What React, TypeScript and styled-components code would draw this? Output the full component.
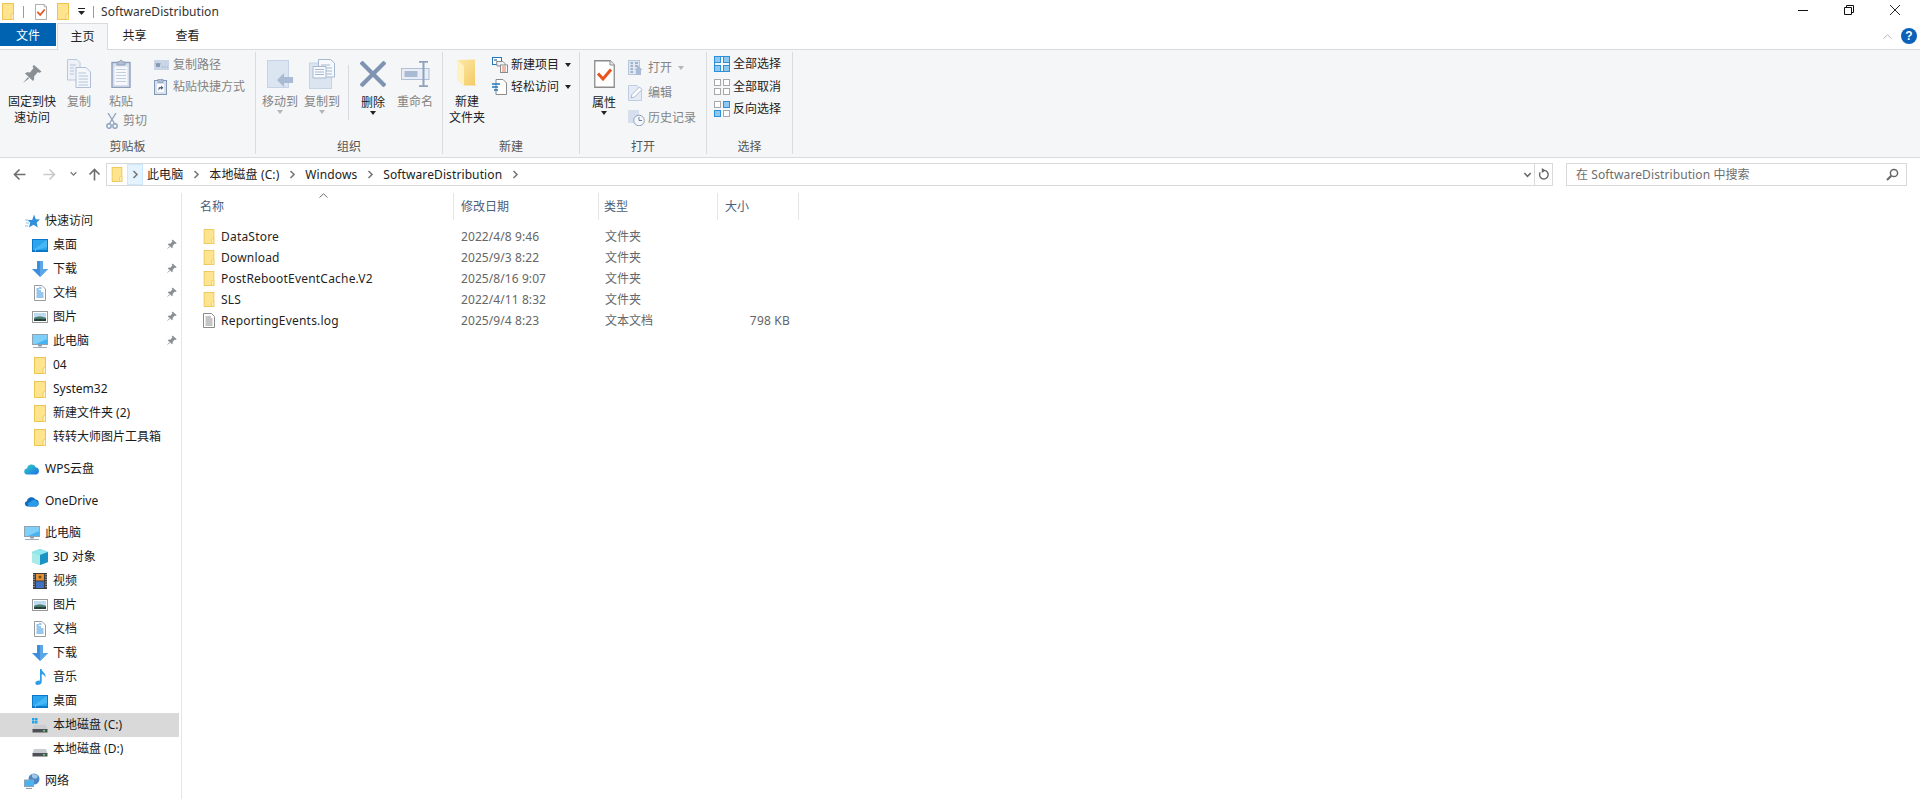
import React from "react";
import styled, { createGlobalStyle } from "styled-components";

const Global = createGlobalStyle`
  html, body { margin: 0; padding: 0; background: #fff; overflow: hidden; }
  #root { width: 1920px; height: 799px; }
  * { box-sizing: border-box; }
`;

const FONT = `"Noto Sans", "Noto Sans CJK SC", sans-serif`;

const Window = styled.div`
  width: 1920px; height: 799px; display: flex; flex-direction: column;
  font: 12px/16px ${FONT}; color: #1a1a1a; background: #fff; overflow: hidden;
`;
const TitleBar = styled.div`height: 23px; display: flex; align-items: center; flex: none;`;
const QatIcon = styled.span<{ $l?: number; $r?: number }>`
  display: inline-flex; align-items: center; justify-content: center;
  margin-left: ${p => p.$l ?? 0}px; margin-right: ${p => p.$r ?? 0}px;
`;
const QatSep = styled.span<{ $l: number }>`width: 1px; height: 12px; background: #9a9a9a; margin-left: ${p => p.$l}px;`;
const TitleText = styled.span`margin-left: 7px; color: #333; letter-spacing: .05px;`;
const WinControls = styled.div`margin-left: auto; display: flex; padding-right: 2px; height: 100%;`;
const WinBtn = styled.span`width: 46px; display: flex; align-items: center; justify-content: center; padding-bottom: 3px;`;

const TabRow = styled.div`height: 26px; display: flex; flex: none; align-items: flex-start;`;
const FileTab = styled.div`width: 56px; height: 23px; background: #0063b1; color: #fff; text-align: center; line-height: 25px; margin-right: 1px;`;
const HomeTab = styled.div`
  width: 51px; height: 27px; background: #f5f6f7; border: 1px solid #dadbdc; border-bottom: 0;
  text-align: center; line-height: 25px; position: relative; z-index: 1; color: #222;
`;
const Tab = styled.div`width: 53px; height: 26px; text-align: center; line-height: 26px; color: #222;`;
const TabRight = styled.div`margin-left: auto; display: flex; align-items: center; gap: 9px; height: 26px; padding-right: 3px;`;

const Ribbon = styled.div`
  height: 109px; flex: none; background: #f5f6f7; border-top: 1px solid #dadbdc; border-bottom: 1px solid #dadbdc;
  display: flex; align-items: flex-start;
`;
const Group = styled.div<{ $w: number }>`
  width: ${p => p.$w}px; margin-top: 2px; height: 102px; border-right: 1px solid #dadbdc;
  display: flex; flex-direction: column; flex: none;
`;
const GroupBody = styled.div<{ $pl?: number }>`
  height: 87px; display: flex; align-items: flex-start; padding-left: ${p => p.$pl ?? 0}px;
`;
const GroupLabel = styled.div`height: 15px; text-align: center; color: #555; line-height: 16px;`;
const Large = styled.div<{ $w: number; $off?: boolean }>`
  width: ${p => p.$w}px; flex: none; display: flex; flex-direction: column; align-items: center; padding-top: 5px;
  color: ${p => (p.$off ? "#848484" : "#222")}; text-align: center;
`;
const LargeIcon = styled.div`height: 33px; margin-bottom: 4px; display: flex; align-items: center; justify-content: center;`;
const LargeText = styled.div<{ $drop?: boolean }>`white-space: nowrap; margin-top: ${p => (p.$drop ? 1 : 0)}px;`;
const Caret = styled.span<{ $off?: boolean }>`
  width: 0; height: 0; border: 3px solid transparent; border-top: 4px solid ${p => (p.$off ? "#b5b5b5" : "#222")}; border-bottom: 0;
  display: block; margin-top: 0;
`;
const InlineCaret = styled(Caret)`margin-left: 6px;`;
const SmallCol = styled.div<{ $l?: number; $t?: number }>`
  display: flex; flex-direction: column; flex: none; margin-left: ${p => p.$l ?? 0}px; margin-top: ${p => p.$t ?? 2}px;
`;
const SmallRow = styled.div<{ $h: number; $off?: boolean }>`
  height: ${p => p.$h}px; display: flex; align-items: center; white-space: nowrap;
  color: ${p => (p.$off ? "#848484" : "#222")};
`;
const SmallIcon = styled.span<{ $w?: number }>`width: ${p => p.$w ?? 19}px; display: flex; align-items: center; flex: none;`;
const PasteCol = styled.div`width: 52px; flex: none; display: flex; flex-direction: column;`;
const CutRow = styled.div`display: flex; align-items: center; gap: 5px; margin-top: 2px; padding-left: 4px; color: #848484; height: 17px;`;
const VSep = styled.div`width: 1px; height: 55px; background: #dadbdc; margin: 13px 0 0 6px; flex: none;`;

const AddressRow = styled.div`height: 34px; flex: none; display: flex; align-items: flex-start; padding-top: 5px;`;
const NavBtns = styled.div`width: 106px; height: 22px; display: flex; align-items: center; flex: none;`;
const NavBtn = styled.span<{ $l: number }>`display: flex; margin-left: ${p => p.$l}px;`;
const AddressBox = styled.div`
  width: 1447px; height: 23px; border: 1px solid #d9d9d9; display: flex; align-items: center; flex: none; padding-left: 4px;
`;
const ChevBox = styled.span`
  width: 16px; height: 21px; background: #e5f3ff; border: 1px solid #cce8ff; margin: 0 4px; display: flex; align-items: center; justify-content: center; flex: none;
`;
const Crumb = styled.span`color: #222; white-space: nowrap; letter-spacing: .1px;`;
const CrumbSep = styled.span`width: 26px; display: flex; justify-content: center; flex: none;`;
const AddrRight = styled.div`margin-left: auto; display: flex; align-items: center; height: 100%;`;
const AddrDrop = styled.span`width: 14px; display: flex; justify-content: center; border-right: 1px solid #d9d9d9; height: 100%; align-items: center;`;
const AddrRefresh = styled.span`width: 17px; display: flex; justify-content: center;`;
const SearchBox = styled.div`
  width: 341px; height: 23px; margin-left: 13px; border: 1px solid #d9d9d9; display: flex; align-items: center;
  padding: 0 7px 0 9px; color: #6d6d6d; flex: none; letter-spacing: .1px;
`;
const SearchIcon = styled.span`margin-left: auto; display: flex;`;

const Main = styled.div`flex: 1; display: flex; min-height: 0; padding-top: 1px;`;
const NavPane = styled.nav`width: 182px; flex: none; border-right: 1px solid #e5e5e5; padding-top: 16px;`;
const NavSection = styled.div`margin-bottom: 8px;`;
const NavRow = styled.div<{ $lvl: number; $sel?: boolean }>`
  width: 179px; height: 24px; display: flex; align-items: center; position: relative; color: #1a1a1a; white-space: nowrap;
  padding-left: ${p => (p.$lvl ? 32 : 24)}px;
  background: ${p => (p.$sel ? "#d9d9d9" : "transparent")};
`;
const NavIcon = styled.span`width: 16px; height: 16px; flex: none; margin-right: 5px; display: flex; align-items: center; justify-content: center;`;
const NavPin = styled.span`position: absolute; left: 166px; top: 6px; display: flex;`;

const Files = styled.div`flex: 1; min-width: 0;`;
const GRID = "272px 145px 119px 81px";
const HeaderRow = styled.div`display: grid; grid-template-columns: ${GRID}; height: 27px; margin-bottom: 6px; position: relative;`;
const HeaderCell = styled.div<{ $pl: number }>`
  border-right: 1px solid #e5e5e5; padding-left: ${p => p.$pl}px; line-height: 27px; color: #4c607a;
`;
const SortArrow = styled.span`position: absolute; left: 137px; top: 0; display: flex;`;
const FileRow = styled.div`display: grid; grid-template-columns: ${GRID}; height: 21px; align-items: center; color: #666;`;
const NameCell = styled.div`display: flex; align-items: center; padding-left: 21px; color: #1f1f1f; white-space: nowrap; letter-spacing: .2px;`;
const FileIcon = styled.span`width: 18px; display: flex; flex: none;`;
const DateCell = styled.div`padding-left: 7px; letter-spacing: .08px;`;
const TypeCell = styled.div`padding-left: 6px;`;
const SizeCell = styled.div`text-align: right; padding-right: 9px; letter-spacing: .2px;`;
const ArrowSvg = styled.svg<{ $rot: number }>`transform: rotate(${p => p.$rot}deg);`;

/* ---------- icons ---------- */
const Folder = ({ w = 12, h = 17 }: { w?: number; h?: number }) => (
  <svg width={w} height={h} viewBox="0 0 12 17">
    <rect x=".5" y=".5" width="11" height="16" fill="#ffe48f" stroke="#ecc452" />
    <path d="M9 16.5V11.5L11.5 10V16.5Z" fill="#fff3c4" stroke="#ecc452" strokeWidth=".8" />
  </svg>
);
const CheckDoc = ({ w = 12, h = 16 }: { w?: number; h?: number }) => (
  <svg width={w} height={h} viewBox="0 0 21 28">
    <path d="M.75.75H16L20.25 5V27.25H.75Z" fill="#fff" stroke="#8b8b8b" strokeWidth="1.3" />
    <path d="M16 .75V5H20.25" fill="#eee" stroke="#8b8b8b" strokeWidth="1" />
    <path d="M4 13.5L9 19 17 9.5" fill="none" stroke="#e8531f" strokeWidth="3" />
  </svg>
);
const Pin = ({ s = 20, c = "#8a8f94" }: { s?: number; c?: string }) => (
  <svg width={s} height={s} viewBox="0 0 20 20">
    <path d="M12 1L19.5 7.5 17.5 9 16 8 12 12.5C12.5 14.5 12 16 11 17L3 9.5C4 8.5 6 8 8 8.5L11.5 4 10.5 2.5Z" fill={c} />
    <path d="M6 13L1 19 7 14.5Z" fill={c} />
  </svg>
);
const CopyIcon = () => (
  <svg width="24" height="29" viewBox="0 0 24 29">
    <path d="M.5.5H10L13 3.5V21H.5Z" fill="#eef2f8" stroke="#b9c8dd" />
    <path d="M9 8.5H19L23.5 13V28.5H9Z" fill="#f5f7fb" stroke="#aebfd6" />
    <path d="M3 6H9M3 9H7M3 12H7M3 15H7M11.5 14H19M11.5 17H21M11.5 20H21M11.5 23H21M11.5 26H21" stroke="#b4c4da" />
  </svg>
);
const PasteIcon = () => (
  <svg width="20" height="29" viewBox="0 0 20 29">
    <rect x="1" y="3.5" width="18" height="25" fill="#d6deeb" stroke="#8d9fba" strokeWidth="1.4" />
    <rect x="3.5" y="7.5" width="13" height="18.5" fill="#f6f8fb" />
    <path d="M5 10.5H15M5 13.5H15M5 16.5H15M5 19.5H15M5 22.5H15" stroke="#c2cfe0" />
    <path d="M6 6V3H8.5C8.5.7 11.5.7 11.5 3H14V6Z" fill="#b3c0d4" stroke="#8d9fba" />
  </svg>
);
const CutIcon = () => (
  <svg width="12" height="16" viewBox="0 0 12 16">
    <path d="M2 0L8.5 10.5M10 0L3.5 10.5" stroke="#8ea1bd" strokeWidth="1.3" fill="none" />
    <circle cx="3" cy="13" r="2.2" fill="none" stroke="#8ea1bd" strokeWidth="1.4" />
    <circle cx="9" cy="13" r="2.2" fill="none" stroke="#8ea1bd" strokeWidth="1.4" />
  </svg>
);
const PathIcon = () => (
  <svg width="15" height="10" viewBox="0 0 15 10">
    <rect width="15" height="10" fill="#c8d5e7" />
    <path d="M2 3L3 7 4 3 5 7 6 3M8 7H8.7M10.5 7H11.2M13 7H13.7" stroke="#6b7f9c" strokeWidth=".8" fill="none" />
  </svg>
);
const ShortcutIcon = () => (
  <svg width="13" height="16" viewBox="0 0 13 16">
    <rect x=".5" y="1.5" width="12" height="14" fill="#d7e0ee" stroke="#8297b6" />
    <rect x="4" y=".5" width="5" height="3" fill="#aebdd2" stroke="#8297b6" strokeWidth=".7" />
    <rect x="3" y="5" width="7" height="8" fill="#fff" />
    <path d="M4.5 12V9.5C4.5 8.5 5 8 6.5 8H7V6.5L9.5 8.8 7 11V9.6C6 9.5 5.5 10 4.5 12Z" fill="#52657f" />
  </svg>
);
const MoveIcon = () => (
  <svg width="26" height="28" viewBox="0 0 26 28">
    <rect x=".5" y=".5" width="21" height="27" fill="#dbe4f1" stroke="#c6d3e6" />
    <path d="M10 20L17 13V17H26V23H17V27Z" fill="#a9bad3" />
  </svg>
);
const CopyToIcon = () => (
  <svg width="26" height="30" viewBox="0 0 26 30">
    <rect x=".5" y="4" width="22" height="25.5" fill="#dbe4f1" stroke="#c6d3e6" />
    <path d="M9.5.5H21.5L25.5 4V18H9.5Z" fill="#f7f9fc" stroke="#a6b8d1" />
    <path d="M12 6H21M12 9H23M12 12H23M12 15H23" stroke="#a6b8d1" />
    <path d="M4 7.5H17V19H4Z" fill="#f7f9fc" stroke="#a6b8d1" />
    <path d="M6 10.5H15M6 13H15M6 15.5H15" stroke="#a6b8d1" />
  </svg>
);
const DeleteIcon = () => (
  <svg width="26" height="26" viewBox="0 0 26 26">
    <path d="M2.5 2.5L23.5 23.5M23.5 2.5L2.5 23.5" stroke="#7f93b3" strokeWidth="4.2" strokeLinecap="square" />
  </svg>
);
const RenameIcon = () => (
  <svg width="29" height="26" viewBox="0 0 29 26">
    <rect x=".5" y="7.5" width="27.5" height="11" fill="#e9eef6" stroke="#aebfd6" />
    <rect x="3.5" y="10" width="13" height="6" fill="#a9bad3" />
    <path d="M18 .8H27M18 25.2H27M22.5 1V25" stroke="#8ea1bd" strokeWidth="2" fill="none" />
  </svg>
);
const NewFolderIcon = () => (
  <svg width="20" height="29" viewBox="0 0 20 29">
    <defs>
      <linearGradient id="nf" x1="0" y1="0" x2="1" y2="1">
        <stop offset="0" stopColor="#fdeaa6" />
        <stop offset="1" stopColor="#f3c965" />
      </linearGradient>
    </defs>
    <path d="M0 1L18 .5V25L19.5 26.5H7L0 20Z" fill="url(#nf)" />
    <path d="M0 1L7 7V26.5L0 20Z" fill="#fff1c0" />
  </svg>
);
const NewItemIcon = () => (
  <svg width="16" height="16" viewBox="0 0 16 16">
    <rect x=".5" y=".5" width="9" height="7" fill="#fff" stroke="#1c79c4" />
    <rect x="2" y="2" width="3" height="2" fill="#8ea1bd" />
    <path d="M4.5 4.5H11L13 6.5V9H5Z" fill="#eef2f8" stroke="#8b8b8b" />
    <rect x="8.5" y="8" width="7" height="7.5" fill="#f9fbff" stroke="#8b8b8b" />
    <path d="M10 10H14M10 12H14M10 14H14" stroke="#e07a5f" />
  </svg>
);
const EasyIcon = () => (
  <svg width="15" height="16" viewBox="0 0 15 16">
    <path d="M4 .5H11L14.5 4V15.5H4Z" fill="#fff" stroke="#8b8b8b" />
    <path d="M0 5H8M0 8H6M2 11H6" stroke="#1c79c4" strokeWidth="1.3" />
  </svg>
);
const OpenIcon = () => (
  <svg width="15" height="15" viewBox="0 0 15 15">
    <rect x=".5" y=".5" width="11" height="14" fill="#dfe7f2" stroke="#b6c5da" />
    <path d="M2.5 3H5M7 3H10M2.5 6H5M7 6H10M2.5 9H5M2.5 12H5" stroke="#8ea1bd" strokeWidth="1.4" />
    <path d="M8 15V10H6.5L10.5 6 14.5 10H13V15Z" fill="#a9bad3" />
  </svg>
);
const EditIcon = () => (
  <svg width="15" height="16" viewBox="0 0 15 16">
    <path d="M.5.5H9L13.5 5V15.5H.5Z" fill="#e4ebf5" stroke="#c0cde0" />
    <path d="M3 13L4 9.5 11.5 2 14 4.5 6.5 12Z" fill="#fff" stroke="#a9bad3" />
  </svg>
);
const HistoryIcon = () => (
  <svg width="17" height="16" viewBox="0 0 17 16">
    <rect width="11" height="13" fill="#d5dfed" />
    <circle cx="11" cy="10.5" r="5.3" fill="#f4f6fa" stroke="#8ea1bd" />
    <path d="M11 7V10.5H14" stroke="#6f829d" fill="none" />
  </svg>
);
const SelectGrid = ({ on }: { on: boolean[] }) => {
  const cells = [[0, 0], [9, 0], [0, 9], [9, 9]];
  return (
    <svg width="16" height="16" viewBox="0 0 16 16">
      {on.every(Boolean) && <rect x=".5" y=".5" width="15" height="15" fill="none" stroke="#2b90d9" />}
      {cells.map(([x, y], i) => (
        <rect key={i} x={x + .5} y={y + .5} width="6" height="6"
          fill={on[i] ? "#8ec8f0" : "#fff"} stroke={on[i] ? "#2b90d9" : "#a8a8a8"} />
      ))}
    </svg>
  );
};
const Chevron = ({ c = "#777", s = 7 }: { c?: string; s?: number }) => (
  <svg width={s} height={s + 2} viewBox="0 0 7 9">
    <path d="M1.5 1L5 4.5 1.5 8" fill="none" stroke={c} strokeWidth="1.6" />
  </svg>
);
const Arrow = ({ dir, c }: { dir: "l" | "r" | "u"; c: string }) => {
  const rot = dir === "l" ? 0 : dir === "r" ? 180 : 90;
  return (
    <ArrowSvg $rot={rot} width="13" height="13" viewBox="0 0 13 13">
      <path d="M12.5 6.5H1.5M6.5 1.5L1.5 6.5 6.5 11.5" fill="none" stroke={c} strokeWidth="1.6" />
    </ArrowSvg>
  );
};
const SmallDown = ({ c = "#777", w = 8 }: { c?: string; w?: number }) => (
  <svg width={w} height="6" viewBox="0 0 8 6">
    <path d="M.8 1L4 4.3 7.2 1" fill="none" stroke={c} strokeWidth="1.5" />
  </svg>
);
const Refresh = () => (
  <svg width="12" height="13" viewBox="0 0 11 12">
    <path d="M6 2.2A4 4 0 1 1 2 4" fill="none" stroke="#666" strokeWidth="1.3" />
    <path d="M3.5 0L7 2.3 3.5 4.5Z" fill="#666" />
  </svg>
);
const Magnifier = () => (
  <svg width="13" height="13" viewBox="0 0 13 13">
    <circle cx="8" cy="5" r="3.6" fill="none" stroke="#666" strokeWidth="1.5" />
    <path d="M5.3 7.7L1 12" stroke="#666" strokeWidth="2" />
  </svg>
);
const Star = () => (
  <svg width="15" height="15" viewBox="0 0 15 15">
    <path d="M9 .5L10.8 5.2 15 5.6 11.7 8.5 12.8 13.5 8.5 10.8 4 13.5 5.2 8.5 2.5 6H7.2Z" fill="#2f8fdd" />
    <path d="M0 6H3M1 9H4M0 12H3" stroke="#7fc0ef" />
  </svg>
);
const Desktop = () => (
  <svg width="16" height="13" viewBox="0 0 16 13">
    <rect width="16" height="13" fill="#0b77c8" />
    <path d="M1 1H15V11H1Z" fill="#2ba5ee" />
    <path d="M15 1V8L4 11H1Z" fill="#47b8f5" />
    <path d="M3 11.7H13" stroke="#dff" strokeWidth=".7" strokeDasharray="1 9" />
  </svg>
);
const Download = () => (
  <svg width="16" height="16" viewBox="0 0 16 16">
    <path d="M5 0H11V8H16L8 16 0 8H5Z" fill="#3d8fdc" />
    <path d="M8 0H11V8H16L8 16Z" fill="#5ba6e8" />
  </svg>
);
const DocIcon = () => (
  <svg width="12" height="16" viewBox="0 0 12 16">
    <path d="M.5.5H8L11.5 4V15.5H.5Z" fill="#fff" stroke="#9a9a9a" />
    <path d="M5 3H7.5M2.5 6H7M2.5 8H9.5M5 10H9.5M2.5 12H9.5" stroke="#2f8fdd" />
    <path d="M2.5 4H5M2.5 10H5" stroke="#2f8fdd" />
  </svg>
);
const PicIcon = () => (
  <svg width="16" height="12" viewBox="0 0 16 12">
    <rect x=".5" y=".5" width="15" height="11" fill="#fff" stroke="#9a9a9a" />
    <rect x="2" y="2" width="12" height="8" fill="#bcdaf0" />
    <path d="M2 7C5 5 10 5 14 7V10H2Z" fill="#4c7a6e" />
    <path d="M2 8.5C6 7.5 10 8.5 14 8V10H2Z" fill="#26403a" />
  </svg>
);
const Monitor = () => (
  <svg width="16" height="14" viewBox="0 0 16 14">
    <rect x=".5" y=".5" width="15" height="10" fill="#49b3f0" stroke="#8fa3b5" />
    <path d="M1 1H15V5L4 10H1Z" fill="#7fd0f9" />
    <path d="M6 11H10V12.5H6Z" fill="#8f9ca8" />
    <path d="M1 13.5H15" stroke="#a0adb9" />
  </svg>
);
const Cube = () => (
  <svg width="16" height="16" viewBox="0 0 16 16">
    <path d="M8 0L16 3V13L8 16 0 13V3Z" fill="#4ec3da" />
    <path d="M8 0L16 3 8 6 0 3Z" fill="#8ee8ee" />
    <path d="M0 3L8 6V16L0 13Z" fill="#a9ebe6" />
    <path d="M8 6L16 3V13L8 16Z" fill="#1c93c6" />
  </svg>
);
const Film = () => (
  <svg width="14" height="16" viewBox="0 0 14 16">
    <rect width="14" height="16" fill="#3d3d3d" />
    <path d="M1 1V15M13 1V15" stroke="#ddd" strokeDasharray="1.2 1.2" />
    <rect x="3" y="1" width="8" height="6.5" fill="#e59138" />
    <rect x="3" y="8.5" width="8" height="6.5" fill="#3f72c4" />
    <circle cx="7" cy="4" r="1.5" fill="#6b4f1c" />
  </svg>
);
const Music = () => (
  <svg width="11" height="16" viewBox="0 0 11 16">
    <path d="M5 0H6.5C7 3 11 4 10.5 8.5 9.8 6.5 8.5 5.5 6.7 5V13C6.7 15 4.5 16 2.5 16 0.5 16 0 14.5.5 13.3 1.2 11.8 3.5 11 5 11.7Z" fill="#2d9de8" />
  </svg>
);
const Drive = ({ win }: { win?: boolean }) => (
  <svg width="16" height="16" viewBox="0 0 16 16">
    {win && (<g fill="#1ea4e9"><rect x="0" y="1" width="2.5" height="2.5" /><rect x="3" y="1" width="2.5" height="2.5" /><rect x="0" y="4" width="2.5" height="2.5" /><rect x="3" y="4" width="2.5" height="2.5" /></g>)}
    <path d="M2 8H14L15.5 12H.5Z" fill="#c9cdd1" />
    <rect x=".5" y="12" width="15" height="3.5" fill="#4e5256" />
    <rect x="11" y="13" width="2" height="1.5" fill="#5fdc5f" />
  </svg>
);
const Globe = () => (
  <svg width="16" height="16" viewBox="0 0 16 16">
    <circle cx="10" cy="6" r="5.5" fill="#4c86c4" />
    <path d="M8 1C7 4 9 6 12 5.5 14 5 14 2 12.5 1.5Z" fill="#9ec7e8" />
    <rect x=".5" y="7" width="9" height="6.5" fill="#49b3f0" stroke="#8fa3b5" />
    <path d="M2 15.5H8" stroke="#8f9ca8" strokeWidth="1.2" />
  </svg>
);
const WpsCloud = () => (
  <svg width="16" height="12" viewBox="0 0 16 12">
    <defs>
      <linearGradient id="wc" x1="0" y1="0" x2="1" y2="1">
        <stop offset="0" stopColor="#2fd4c4" />
        <stop offset="1" stopColor="#1b6fe8" />
      </linearGradient>
    </defs>
    <path d="M3.5 11.5A3 3 0 0 1 3 5.5 4.6 4.6 0 0 1 11.8 4.2 3.8 3.8 0 0 1 12.5 11.5Z" fill="url(#wc)" />
  </svg>
);
const OneDrive = () => (
  <svg width="16" height="11" viewBox="0 0 16 11">
    <path d="M3.2 10.5A2.8 2.8 0 0 1 3 5 4.5 4.5 0 0 1 11.4 3.6 3.6 3.6 0 0 1 12.6 10.5Z" fill="#0f6cbd" />
    <path d="M6 10.5A2.2 2.2 0 0 1 6.5 6 3.2 3.2 0 0 1 12 5 2.9 2.9 0 0 1 12.6 10.5Z" fill="#2a9be8" />
  </svg>
);
const LogIcon = () => (
  <svg width="12" height="15" viewBox="0 0 12 15">
    <path d="M.5.5H8.5L11.5 3.5V14.5H.5Z" fill="#fff" stroke="#8a8a8a" />
    <path d="M2.5 4H8M2.5 6H9.5M2.5 8H9.5M2.5 10H9.5M2.5 12H9.5" stroke="#8a8a8a" />
  </svg>
);
const Help = () => (
  <svg width="16" height="16" viewBox="0 0 16 16">
    <circle cx="8" cy="8" r="8" fill="#0b62b8" />
    <text x="8" y="12.3" textAnchor="middle" fontSize="12" fontWeight="700" fontFamily="Liberation Sans, sans-serif" fill="#fff">?</text>
  </svg>
);

type NavItem = { label: string; icon: React.ReactNode; lvl: number; pin?: boolean; sel?: boolean };
const quick: NavItem[] = [
  { label: "快速访问", icon: <Star />, lvl: 0 },
  { label: "桌面", icon: <Desktop />, lvl: 1, pin: true },
  { label: "下载", icon: <Download />, lvl: 1, pin: true },
  { label: "文档", icon: <DocIcon />, lvl: 1, pin: true },
  { label: "图片", icon: <PicIcon />, lvl: 1, pin: true },
  { label: "此电脑", icon: <Monitor />, lvl: 1, pin: true },
  { label: "04", icon: <Folder />, lvl: 1 },
  { label: "System32", icon: <Folder />, lvl: 1 },
  { label: "新建文件夹 (2)", icon: <Folder />, lvl: 1 },
  { label: "转转大师图片工具箱", icon: <Folder />, lvl: 1 },
];
const pc: NavItem[] = [
  { label: "此电脑", icon: <Monitor />, lvl: 0 },
  { label: "3D 对象", icon: <Cube />, lvl: 1 },
  { label: "视频", icon: <Film />, lvl: 1 },
  { label: "图片", icon: <PicIcon />, lvl: 1 },
  { label: "文档", icon: <DocIcon />, lvl: 1 },
  { label: "下载", icon: <Download />, lvl: 1 },
  { label: "音乐", icon: <Music />, lvl: 1 },
  { label: "桌面", icon: <Desktop />, lvl: 1 },
  { label: "本地磁盘 (C:)", icon: <Drive win />, lvl: 1, sel: true },
  { label: "本地磁盘 (D:)", icon: <Drive />, lvl: 1 },
];
const Row = ({ it }: { it: NavItem }) => (
  <NavRow $lvl={it.lvl} $sel={it.sel}>
    <NavIcon>{it.icon}</NavIcon>
    {it.label}
    {it.pin && <NavPin><Pin s={11} /></NavPin>}
  </NavRow>
);

const files = [
  { n: "DataStore", d: "2022/4/8 9:46", t: "文件夹", s: "" },
  { n: "Download", d: "2025/9/3 8:22", t: "文件夹", s: "" },
  { n: "PostRebootEventCache.V2", d: "2025/8/16 9:07", t: "文件夹", s: "" },
  { n: "SLS", d: "2022/4/11 8:32", t: "文件夹", s: "" },
  { n: "ReportingEvents.log", d: "2025/9/4 8:23", t: "文本文档", s: "798 KB" },
];

export default function App() {
  return (
    <Window>
      <Global />
      <TitleBar>
        <QatIcon $l={2}><Folder /></QatIcon>
        <QatSep $l={9} />
        <QatIcon $l={11}><CheckDoc /></QatIcon>
        <QatIcon $l={10}><Folder /></QatIcon>
        <QatIcon $l={9}>
          <svg width="7" height="7" viewBox="0 0 7 7"><path d="M0 0H7V1H0ZM0 3H7L3.5 7Z" fill="#222" /></svg>
        </QatIcon>
        <QatSep $l={8} />
        <TitleText>SoftwareDistribution</TitleText>
        <WinControls>
          <WinBtn><svg width="10" height="10" viewBox="0 0 10 10"><path d="M0 5.5H10" stroke="#111" /></svg></WinBtn>
          <WinBtn><svg width="10" height="10" viewBox="0 0 10 10"><path d="M.5 2.5H7.5V9.5H.5ZM2.5 2.5V.5H9.5V7.5H7.5" fill="none" stroke="#111" /></svg></WinBtn>
          <WinBtn><svg width="10" height="10" viewBox="0 0 10 10"><path d="M0 0L10 10M10 0L0 10" stroke="#111" strokeWidth=".9" /></svg></WinBtn>
        </WinControls>
      </TitleBar>
      <TabRow>
        <FileTab>文件</FileTab>
        <HomeTab>主页</HomeTab>
        <Tab>共享</Tab>
        <Tab>查看</Tab>
        <TabRight>
          <svg width="9" height="5" viewBox="0 0 9 5"><path d="M.5 4.5L4.5.8 8.5 4.5" fill="none" stroke="#b5b5b5" /></svg>
          <Help />
        </TabRight>
      </TabRow>
      <Ribbon>
        <Group $w={256}>
          <GroupBody $pl={8}>
            <Large $w={48}>
              <LargeIcon><Pin /></LargeIcon>
              <LargeText>固定到快<br />速访问</LargeText>
            </Large>
            <Large $w={46} $off>
              <LargeIcon><CopyIcon /></LargeIcon>
              <LargeText>复制</LargeText>
            </Large>
            <PasteCol>
              <Large $w={38} $off>
                <LargeIcon><PasteIcon /></LargeIcon>
                <LargeText>粘贴</LargeText>
              </Large>
              <CutRow><CutIcon />剪切</CutRow>
            </PasteCol>
            <SmallCol>
              <SmallRow $h={22} $off><SmallIcon><PathIcon /></SmallIcon>复制路径</SmallRow>
              <SmallRow $h={22} $off><SmallIcon><ShortcutIcon /></SmallIcon>粘贴快捷方式</SmallRow>
            </SmallCol>
          </GroupBody>
          <GroupLabel>剪贴板</GroupLabel>
        </Group>
        <Group $w={187}>
          <GroupBody $pl={2}>
            <Large $w={44} $off>
              <LargeIcon><MoveIcon /></LargeIcon>
              <LargeText>移动到</LargeText>
              <Caret $off />
            </Large>
            <Large $w={40} $off>
              <LargeIcon><CopyToIcon /></LargeIcon>
              <LargeText>复制到</LargeText>
              <Caret $off />
            </Large>
            <VSep />
            <Large $w={48}>
              <LargeIcon><DeleteIcon /></LargeIcon>
              <LargeText $drop>删除</LargeText>
              <Caret />
            </Large>
            <Large $w={36} $off>
              <LargeIcon><RenameIcon /></LargeIcon>
              <LargeText>重命名</LargeText>
            </Large>
          </GroupBody>
          <GroupLabel>组织</GroupLabel>
        </Group>
        <Group $w={137}>
          <GroupBody $pl={4}>
            <Large $w={40}>
              <LargeIcon><NewFolderIcon /></LargeIcon>
              <LargeText>新建<br />文件夹</LargeText>
            </Large>
            <SmallCol $l={5}>
              <SmallRow $h={22}><SmallIcon><NewItemIcon /></SmallIcon>新建项目<InlineCaret /></SmallRow>
              <SmallRow $h={22}><SmallIcon><EasyIcon /></SmallIcon>轻松访问<InlineCaret /></SmallRow>
            </SmallCol>
          </GroupBody>
          <GroupLabel>新建</GroupLabel>
        </Group>
        <Group $w={127}>
          <GroupBody $pl={4}>
            <Large $w={40}>
              <LargeIcon><CheckDoc w={21} h={28} /></LargeIcon>
              <LargeText $drop>属性</LargeText>
              <Caret />
            </Large>
            <SmallCol $l={4} $t={3}>
              <SmallRow $h={25} $off><SmallIcon $w={20}><OpenIcon /></SmallIcon>打开<InlineCaret $off /></SmallRow>
              <SmallRow $h={25} $off><SmallIcon $w={20}><EditIcon /></SmallIcon>编辑</SmallRow>
              <SmallRow $h={25} $off><SmallIcon $w={20}><HistoryIcon /></SmallIcon>历史记录</SmallRow>
            </SmallCol>
          </GroupBody>
          <GroupLabel>打开</GroupLabel>
        </Group>
        <Group $w={86}>
          <GroupBody $pl={7}>
            <SmallCol $t={1}>
              <SmallRow $h={22.5}><SmallIcon><SelectGrid on={[true, true, true, true]} /></SmallIcon>全部选择</SmallRow>
              <SmallRow $h={22.5}><SmallIcon><SelectGrid on={[false, false, false, false]} /></SmallIcon>全部取消</SmallRow>
              <SmallRow $h={22.5}><SmallIcon><SelectGrid on={[false, true, true, false]} /></SmallIcon>反向选择</SmallRow>
            </SmallCol>
          </GroupBody>
          <GroupLabel>选择</GroupLabel>
        </Group>
      </Ribbon>
      <AddressRow>
        <NavBtns>
          <NavBtn $l={13}><Arrow dir="l" c="#6d6d6d" /></NavBtn>
          <NavBtn $l={17}><Arrow dir="r" c="#c9c9c9" /></NavBtn>
          <NavBtn $l={14}><SmallDown w={7} /></NavBtn>
          <NavBtn $l={11}><Arrow dir="u" c="#6d6d6d" /></NavBtn>
        </NavBtns>
        <AddressBox>
          <Folder w={12} h={15} />
          <ChevBox><Chevron /></ChevBox>
          <Crumb>此电脑</Crumb>
          <CrumbSep><Chevron /></CrumbSep>
          <Crumb>本地磁盘 (C:)</Crumb>
          <CrumbSep><Chevron /></CrumbSep>
          <Crumb>Windows</Crumb>
          <CrumbSep><Chevron /></CrumbSep>
          <Crumb>SoftwareDistribution</Crumb>
          <CrumbSep><Chevron /></CrumbSep>
          <AddrRight>
            <AddrDrop><SmallDown c="#666" w={9} /></AddrDrop>
            <AddrRefresh><Refresh /></AddrRefresh>
          </AddrRight>
        </AddressBox>
        <SearchBox>
          在 SoftwareDistribution 中搜索
          <SearchIcon><Magnifier /></SearchIcon>
        </SearchBox>
      </AddressRow>
      <Main>
        <NavPane>
          <NavSection>{quick.map(it => <Row key={it.label} it={it} />)}</NavSection>
          <NavSection><Row it={{ label: "WPS云盘", icon: <WpsCloud />, lvl: 0 }} /></NavSection>
          <NavSection><Row it={{ label: "OneDrive", icon: <OneDrive />, lvl: 0 }} /></NavSection>
          <NavSection>{pc.map(it => <Row key={it.label} it={it} />)}</NavSection>
          <NavSection><Row it={{ label: "网络", icon: <Globe />, lvl: 0 }} /></NavSection>
        </NavPane>
        <Files>
          <HeaderRow>
            <SortArrow>
              <svg width="9" height="5" viewBox="0 0 9 5"><path d="M.5 4.5L4.5.8 8.5 4.5" fill="none" stroke="#6d6d6d" /></svg>
            </SortArrow>
            <HeaderCell $pl={18}>名称</HeaderCell>
            <HeaderCell $pl={7}>修改日期</HeaderCell>
            <HeaderCell $pl={5}>类型</HeaderCell>
            <HeaderCell $pl={7}>大小</HeaderCell>
          </HeaderRow>
          {files.map(f => (
            <FileRow key={f.n}>
              <NameCell><FileIcon>{f.s ? <LogIcon /> : <Folder w={12} h={15} />}</FileIcon>{f.n}</NameCell>
              <DateCell>{f.d}</DateCell>
              <TypeCell>{f.t}</TypeCell>
              <SizeCell>{f.s}</SizeCell>
            </FileRow>
          ))}
        </Files>
      </Main>
    </Window>
  );
}
